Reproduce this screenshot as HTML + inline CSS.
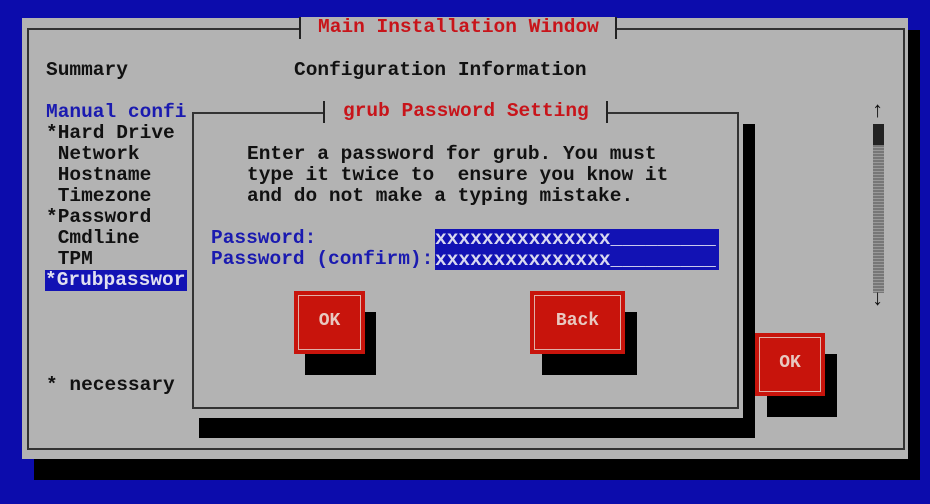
<!DOCTYPE html>
<html><head><meta charset="utf-8"><style>
*{margin:0;padding:0}
body{width:930px;height:504px;background:#0c0cac;position:relative;overflow:hidden;font-family:"Liberation Mono",monospace;font-weight:bold;font-size:19.5px;}
div{position:absolute}
.t{white-space:pre;line-height:21px;color:#111;}
.r{color:#c8141a}
.b{color:#1a1ab0}
.blk{background:#000}
.gry{background:#b3b3b3}
.btn{background:#c8140c}
.btn i{position:absolute;left:4px;top:4px;right:4px;bottom:4px;border:1.5px solid #e0b0a8;}
.btn span{position:absolute;left:0;right:0;top:20px;text-align:center;color:#e8c8c0;font-family:"Liberation Mono",monospace;font-size:18px;line-height:20px}
</style></head><body>
<div class="blk" style="left:34px;top:30px;width:886px;height:450px"></div>
<div class="gry" style="left:22px;top:18px;width:886px;height:441px"></div>
<div style="left:27px;top:28px;width:874px;height:418px;border:2px solid #333"></div>
<div class="gry t r" style="left:299px;top:17px;padding:0 16px 0 17px;border-left:2px solid #222;border-right:2px solid #222;height:22px">Main Installation Window</div>

<div class="t" style="left:46px;top:60px">Summary</div>
<div class="t" style="left:294px;top:60px">Configuration Information</div>
<div class="t b" style="left:46px;top:102px">Manual confi</div>
<div class="t" style="left:46px;top:123px">*Hard Drive
 Network
 Hostname
 Timezone
*Password
 Cmdline
 TPM</div>
<div class="t" style="left:45px;top:270px;background:#1212b4;color:#e0e0f0;width:142px;height:21px">*Grubpasswor</div>
<div class="t" style="left:46px;top:375px">* necessary</div>

<!-- scrollbar -->
<div class="t" style="left:871px;top:101px;font-size:22px;font-weight:900">↑</div>
<div style="left:873px;top:124px;width:11px;height:169px;background:repeating-linear-gradient(#777 0 2px,#999 2px 3px)"></div>
<div style="left:873px;top:124px;width:11px;height:21px;background:#222"></div>
<div class="t" style="left:871px;top:289px;font-size:22px;font-weight:900">↓</div>

<!-- main OK -->
<div class="blk" style="left:767px;top:354px;width:70px;height:63px"></div>
<div class="btn" style="left:755px;top:333px;width:70px;height:63px"><i></i><span>OK</span></div>

<!-- dialog -->
<div class="blk" style="left:199px;top:124px;width:556px;height:314px"></div>
<div class="gry" style="left:187px;top:100px;width:556px;height:318px"></div>
<div style="left:192px;top:112px;width:543px;height:293px;border:2px solid #333"></div>
<div class="gry t r" style="left:323px;top:101px;padding:0 17px 0 18px;border-left:2px solid #222;border-right:2px solid #222;height:22px">grub Password Setting</div>
<div class="t" style="left:247px;top:144px">Enter a password for grub. You must
type it twice to  ensure you know it
and do not make a typing mistake.</div>
<div class="t b" style="left:211px;top:228px">Password:
Password (confirm):</div>
<div class="t" style="left:435px;top:229px;width:284px;height:41px;background:#1212b4;color:#d8d8f0;line-height:20.5px">xxxxxxxxxxxxxxx_________
xxxxxxxxxxxxxxx_________</div>

<div class="blk" style="left:305px;top:312px;width:71px;height:63px"></div>
<div class="btn" style="left:294px;top:291px;width:71px;height:63px"><i></i><span>OK</span></div>
<div class="blk" style="left:542px;top:312px;width:95px;height:63px"></div>
<div class="btn" style="left:530px;top:291px;width:95px;height:63px"><i></i><span>Back</span></div>
</body></html>
